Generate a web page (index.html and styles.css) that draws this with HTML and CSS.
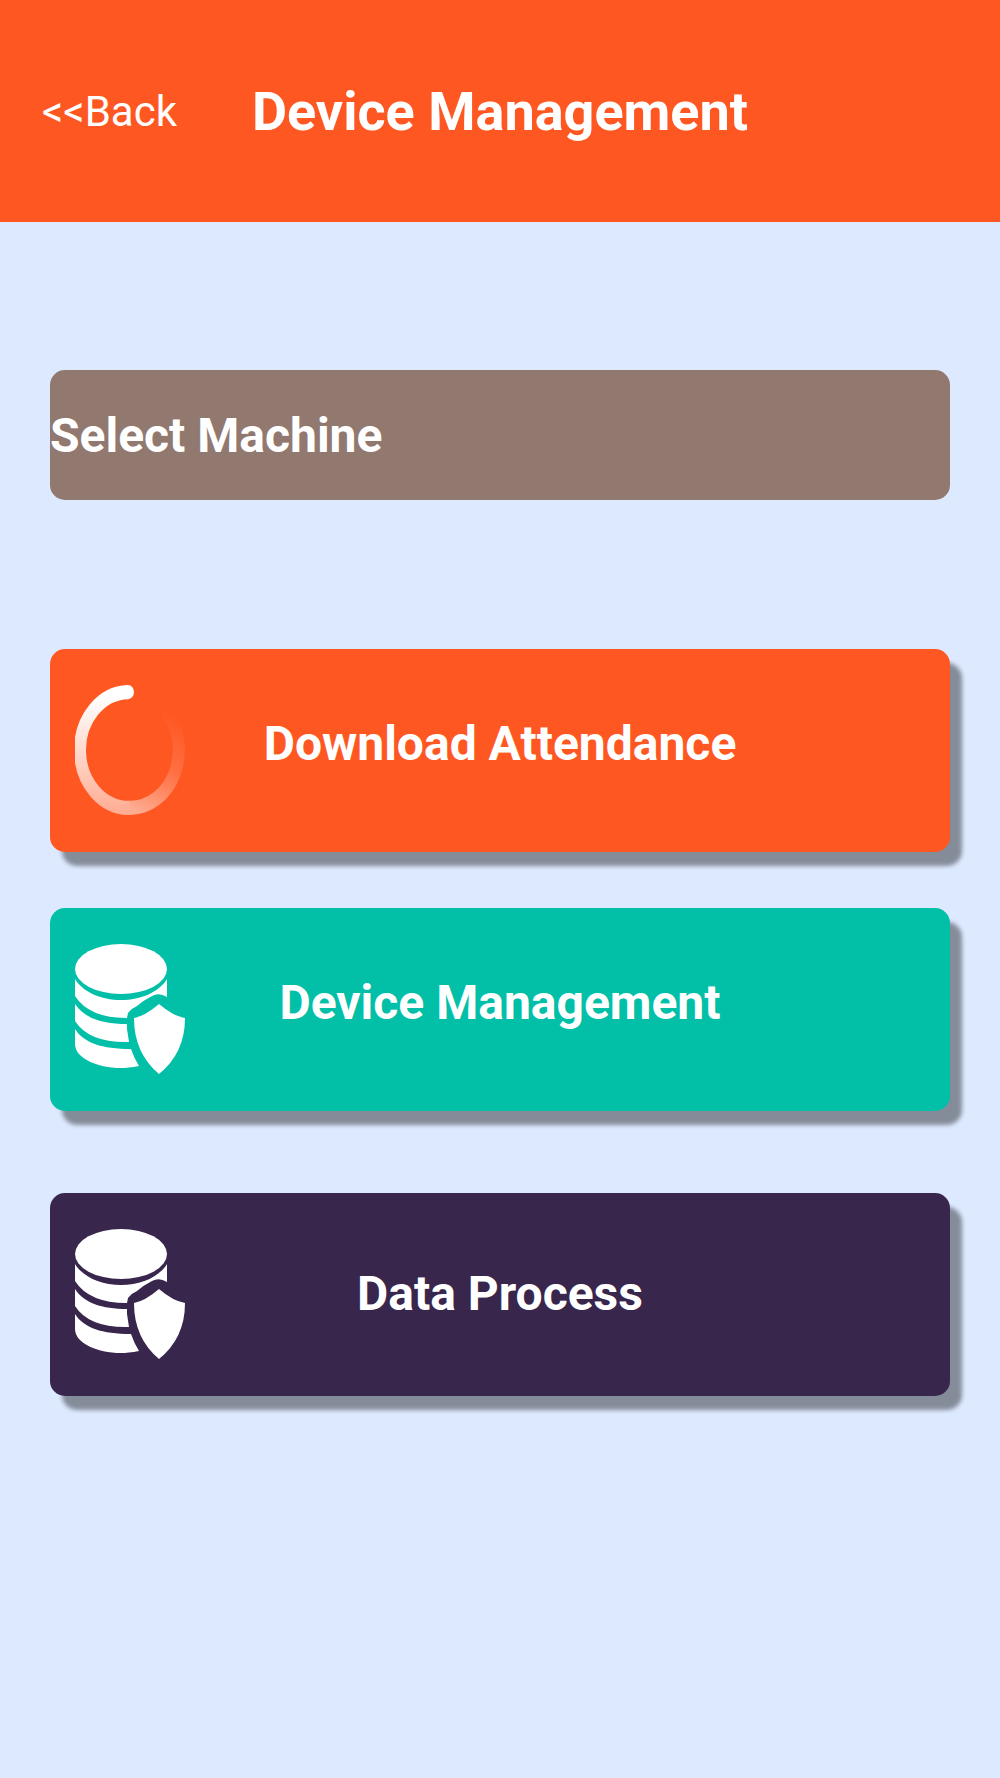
FILE: index.html
```html
<!DOCTYPE html>
<html lang="en">
<head>
<meta charset="utf-8">
<meta name="viewport" content="width=device-width, initial-scale=1">
<title>Device Management</title>
<link rel="stylesheet" href="styles.css">
</head>
<body>
<svg class="sprite" aria-hidden="true">
  <symbol id="database-shield" viewBox="0 0 110 130">
    <ellipse cx="46" cy="25" rx="46" ry="25"/>
    <path d="M0 35C8 48 26 56 46 56S84 48 92 35V53Q84 48 77 52Q69 56 62 62Q57 64 53 69L52 74Q14 74 0 52Z"/>
    <path d="M0 60C9 74 27 80 52 80V85L54 98Q14 99 0 77Z"/>
    <path d="M0 85C9 99 27 105 56 105Q59 114 64 122Q53 124 46 124C22 124 0 114 0 100Z"/>
    <path d="M84 60Q98 72 110 74Q110 109 84 130Q59 109 59 74Q70 72 84 60Z"/>
  </symbol>
</svg>
<header class="header">
  <a class="back" href="#">&lt;&lt;Back</a>
  <h1 class="title">Device Management</h1>
</header>
<main class="content">
  <select class="machine" aria-label="Machine">
    <option>Select Machine</option>
  </select>
  <div class="actions">
    <button class="action action-download" type="button">
      <svg class="icon spinner" viewBox="0 0 110 110" preserveAspectRatio="none" aria-hidden="true">
        <defs>
          <linearGradient id="fade-left" gradientUnits="userSpaceOnUse" x1="0" y1="0" x2="0" y2="110">
            <stop offset="0.1" stop-color="#fff"/>
            <stop offset="1" stop-color="#fff" stop-opacity="0.5"/>
          </linearGradient>
          <linearGradient id="fade-right" gradientUnits="userSpaceOnUse" x1="55" y1="104" x2="91" y2="22">
            <stop offset="0" stop-color="#fff" stop-opacity="0.5"/>
            <stop offset="0.5" stop-color="#fff" stop-opacity="0.15"/>
            <stop offset="1" stop-color="#fff" stop-opacity="0"/>
          </linearGradient>
        </defs>
        <path d="M55 104A49 49 0 0 1 53 6" stroke="url(#fade-left)"/>
        <path d="M55 104A49 49 0 0 0 91 22" stroke="url(#fade-right)"/>
        <circle class="cap" cx="53" cy="6" r="6"/>
      </svg>
      <span class="label">Download Attendance</span>
    </button>
    <button class="action action-device" type="button">
      <svg class="icon" aria-hidden="true"><use href="#database-shield"/></svg>
      <span class="label">Device Management</span>
    </button>
    <button class="action action-process" type="button">
      <svg class="icon" aria-hidden="true"><use href="#database-shield"/></svg>
      <span class="label">Data Process</span>
    </button>
  </div>
</main>
</body>
</html>
```
FILE: styles.css
```css
* {
  box-sizing: border-box;
}

body {
  margin: 0;
  min-height: 100vh;
  background: #dde9ff;
  color: #fff;
  font-family: Roboto, "Liberation Sans", sans-serif;
}

.sprite {
  display: none;
}

.header {
  display: grid;
  grid-template-columns: 1fr auto 1fr;
  align-items: center;
  padding: 72px 42px 70px;
  background: #ff5722;
}

.back {
  color: #fff;
  font-size: 42px;
  line-height: 80px;
  text-decoration: none;
}

.title {
  margin: 0;
  font-size: 54px;
  font-weight: 700;
  line-height: 80px;
}

.content {
  padding: 148px 50px;
}

.machine {
  display: block;
  width: 100%;
  height: 130px;
  padding: 2px 0 0;
  border: 0;
  border-radius: 15px;
  appearance: none;
  background: #92796f;
  color: #fff;
  font: 700 48px/80px Roboto, "Liberation Sans", sans-serif;
}

.actions {
  display: grid;
  gap: 56px;
  margin-top: 149px;
}

.action {
  display: grid;
  grid-template-columns: 110px 1fr 110px;
  align-items: center;
  padding: 36px 25px 37px;
  border: 0;
  border-radius: 15px;
  box-shadow: 12px 14px 4px rgb(0 0 0 / 40%);
  color: #fff;
  font: 700 48px/80px Roboto, "Liberation Sans", sans-serif;
}

.action-download {
  background: #ff5722;
}

.action-device {
  background: #02bfa7;
}

.action-process {
  margin-top: 26px;
  background: #38264d;
}

.action-download .label,
.action-device .label {
  padding-bottom: 12px;
}

.icon {
  width: 110px;
  height: 130px;
  fill: #fff;
}

.spinner {
  fill: none;
  stroke-width: 12px;
}

.cap {
  fill: #fff;
}
```
